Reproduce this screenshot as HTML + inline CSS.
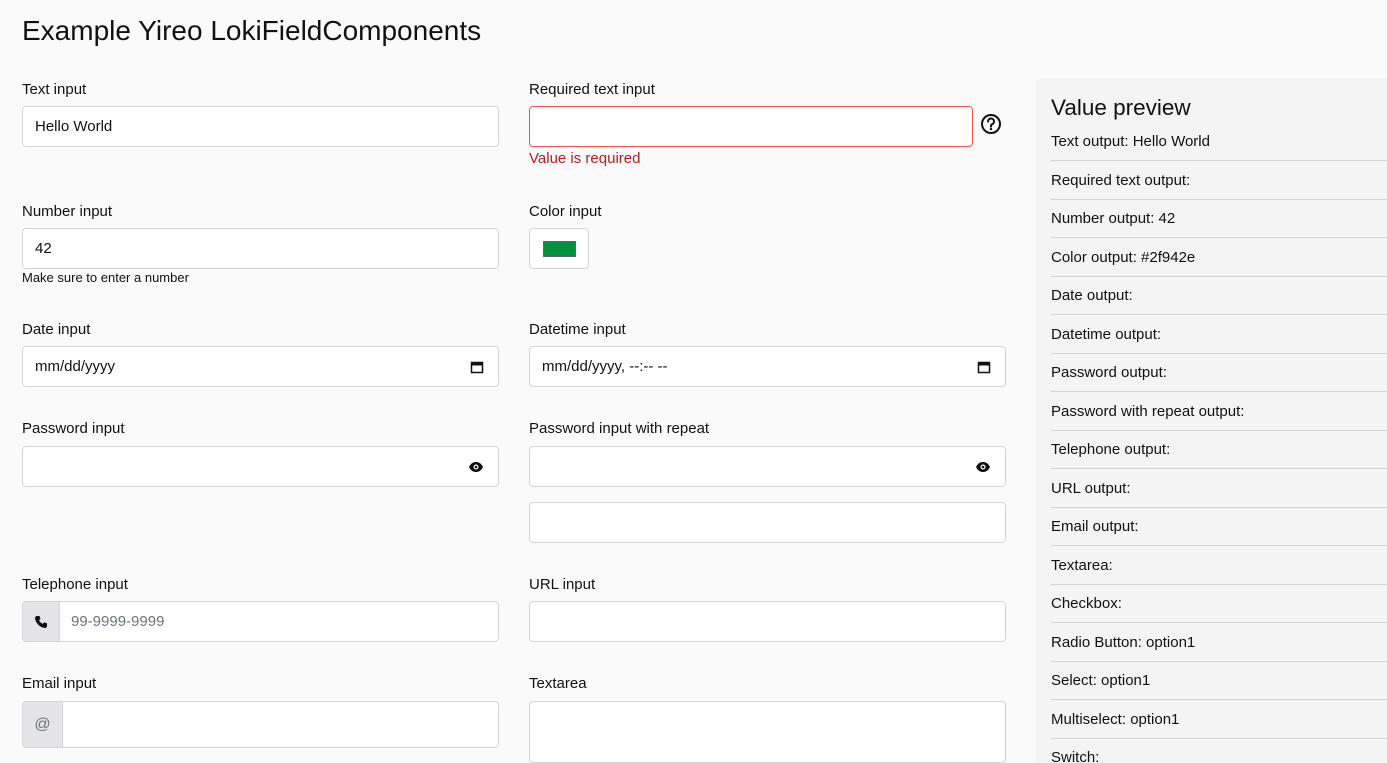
<!DOCTYPE html>
<html style="overflow:hidden"><head><style>
body{margin:0;width:1387px;height:763px;overflow:hidden;background:#fafafa;font-family:"Liberation Sans",sans-serif;color:#111;position:relative}
.a{position:absolute}
.lbl{position:absolute;font-size:15px;line-height:17px}
.in{position:absolute;box-sizing:border-box;background:#fff;border:1px solid #d4d4d8;border-radius:4px;height:41px;font-size:15px;line-height:40px;padding-left:12px}
.side{position:absolute;left:1036px;top:78px;width:351px;height:685px;background:#f4f4f4;border-radius:6px 0 0 0;overflow:hidden}
.row{position:absolute;left:15px;right:0;font-size:15px;line-height:17px;height:28px;border-bottom:1px solid #d4d4d4;box-sizing:border-box}
.cal{position:absolute;right:14px;top:13px}
</style></head><body>
<div class="a" style="left:22px;top:14px;font-size:28px;line-height:34px">Example Yireo LokiFieldComponents</div>

<div class="lbl" style="left:22px;top:81px">Text input</div>
<div class="in" style="left:22px;top:106px;width:477px">Hello World</div>
<div class="lbl" style="left:529px;top:81px">Required text input</div>
<div class="in" style="left:529px;top:106px;width:444px;border-color:#f05252"></div>
<svg class="a" style="left:980px;top:113px" width="22" height="22" viewBox="0 0 22 22"><circle cx="11" cy="11" r="9" fill="none" stroke="#111" stroke-width="2"/><path d="M8 8.5a3 3 0 1 1 4 2.8c-.7.3-1 .8-1 1.5v.7" fill="none" stroke="#111" stroke-width="2" stroke-linecap="round"/><circle cx="11" cy="16" r="1.2" fill="#111"/></svg>
<div class="lbl" style="left:529px;top:150px;color:#b91c1c">Value is required</div>

<div class="lbl" style="left:22px;top:203px">Number input</div>
<div class="in" style="left:22px;top:228px;width:477px">42</div>
<div class="a" style="left:22px;top:270px;font-size:13px">Make sure to enter a number</div>
<div class="lbl" style="left:529px;top:203px">Color input</div>
<div class="in" style="left:529px;top:228px;width:60px;padding:0"><div class="a" style="left:13px;top:12px;width:31px;height:14px;background:#00913c;border:1px solid #666"></div></div>

<div class="lbl" style="left:22px;top:321px">Date input</div>
<div class="in" style="left:22px;top:346px;width:477px">mm/dd/yyyy<svg class="cal" width="14" height="14" viewBox="0 0 14 14"><rect x="1.5" y="2.5" width="11" height="10" fill="none" stroke="#111" stroke-width="1.5"/><rect x="1.5" y="2.5" width="11" height="3" fill="#111"/></svg></div>
<div class="lbl" style="left:529px;top:321px">Datetime input</div>
<div class="in" style="left:529px;top:346px;width:477px">mm/dd/yyyy, --:-- --<svg class="cal" width="14" height="14" viewBox="0 0 14 14"><rect x="1.5" y="2.5" width="11" height="10" fill="none" stroke="#111" stroke-width="1.5"/><rect x="1.5" y="2.5" width="11" height="3" fill="#111"/></svg></div>

<div class="lbl" style="left:22px;top:420px">Password input</div>
<div class="in" style="left:22px;top:446px;width:477px"><svg class="a" style="right:14px;top:13px" width="16" height="14" viewBox="0 0 16 14"><path d="M1 7C3 3 5.5 2 8 2s5 1 7 5c-2 4-4.5 5-7 5S3 11 1 7z" fill="#111"/><circle cx="8" cy="7" r="2.5" fill="#fff"/><circle cx="8" cy="7" r="1.3" fill="#111"/></svg></div>
<div class="lbl" style="left:529px;top:420px">Password input with repeat</div>
<div class="in" style="left:529px;top:446px;width:477px"><svg class="a" style="right:14px;top:13px" width="16" height="14" viewBox="0 0 16 14"><path d="M1 7C3 3 5.5 2 8 2s5 1 7 5c-2 4-4.5 5-7 5S3 11 1 7z" fill="#111"/><circle cx="8" cy="7" r="2.5" fill="#fff"/><circle cx="8" cy="7" r="1.3" fill="#111"/></svg></div>
<div class="in" style="left:529px;top:502px;width:477px"></div>

<div class="lbl" style="left:22px;top:576px">Telephone input</div>
<div class="in" style="left:22px;top:601px;width:477px;padding-left:0;overflow:hidden"><div class="a" style="left:0;top:0;width:36px;height:39px;background:#e5e5e7;border-right:1px solid #d4d4d8"></div><svg class="a" style="left:11px;top:13px" width="14" height="14" viewBox="0 0 14 14"><path d="M3 1l2.5 0 1 3-1.5 1.3c.8 1.6 2 2.8 3.6 3.6L10 7.4l3 1V11c0 1-1 2-2 2C6 12.6 1.4 8 1 3c0-1 1-2 2-2z" fill="#111"/></svg><span class="a" style="left:48px;color:#6b7280">99-9999-9999</span></div>
<div class="lbl" style="left:529px;top:576px">URL input</div>
<div class="in" style="left:529px;top:601px;width:477px"></div>

<div class="lbl" style="left:22px;top:675px">Email input</div>
<div class="in" style="left:22px;top:701px;width:477px;height:47px;padding-left:0;overflow:hidden"><div class="a" style="left:0;top:0;width:39px;height:45px;background:#e5e5e7;border-right:1px solid #d4d4d8;color:#6b7280;text-align:center;line-height:45px;font-size:16px">@</div></div>
<div class="lbl" style="left:529px;top:675px">Textarea</div>
<div class="in" style="left:529px;top:701px;width:477px;height:62px"></div>

<div class="side">
<div class="a" style="left:15px;top:17px;font-size:22.5px;line-height:26px">Value preview</div>
<div class="row" style="top:55px">Text output: Hello World</div>
<div class="row" style="top:94px">Required text output:</div>
<div class="row" style="top:132px">Number output: 42</div>
<div class="row" style="top:171px">Color output: #2f942e</div>
<div class="row" style="top:209px">Date output:</div>
<div class="row" style="top:248px">Datetime output:</div>
<div class="row" style="top:286px">Password output:</div>
<div class="row" style="top:325px">Password with repeat output:</div>
<div class="row" style="top:363px">Telephone output:</div>
<div class="row" style="top:402px">URL output:</div>
<div class="row" style="top:440px">Email output:</div>
<div class="row" style="top:479px">Textarea:</div>
<div class="row" style="top:517px">Checkbox:</div>
<div class="row" style="top:556px">Radio Button: option1</div>
<div class="row" style="top:594px">Select: option1</div>
<div class="row" style="top:633px">Multiselect: option1</div>
<div class="row" style="top:671px;border:0">Switch:</div>
</div>
</body></html>
